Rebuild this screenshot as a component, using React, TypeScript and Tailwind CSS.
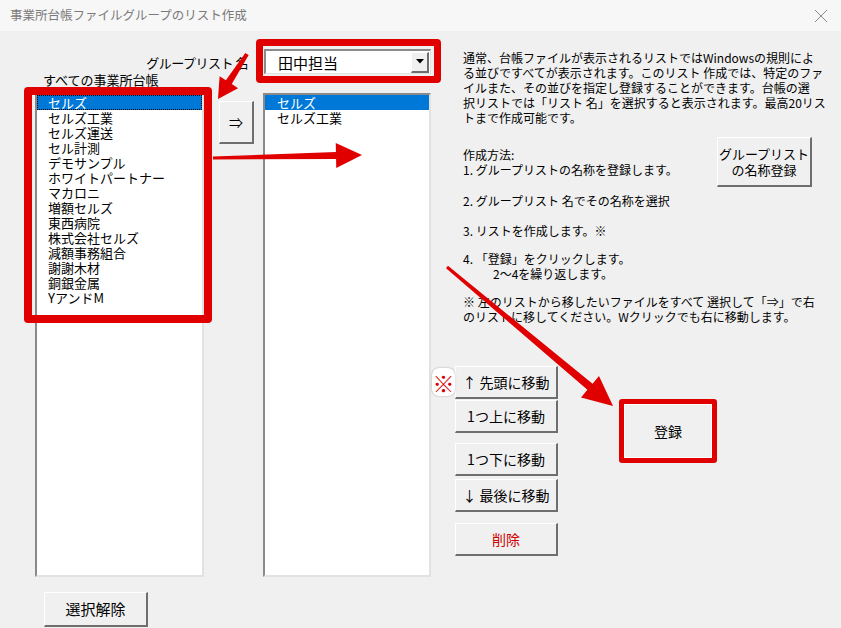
import React from "react";

type Pt = [number, number];

function arrowPoints(tail: Pt, tip: Pt, w1: number, w2: number, L: number, H: number): string {
  const dx = tip[0] - tail[0];
  const dy = tip[1] - tail[1];
  const len = Math.hypot(dx, dy);
  const ux = dx / len;
  const uy = dy / len;
  const nx = -uy;
  const ny = ux;
  const neck: Pt = [tip[0] - ux * L, tip[1] - uy * L];
  const p = (b: Pt, k: number): string => `${b[0] + nx * k},${b[1] + ny * k}`;
  return [
    p(tail, w1 / 2),
    p(neck, w2 / 2),
    p(neck, H / 2),
    `${tip[0]},${tip[1]}`,
    p(neck, -H / 2),
    p(neck, -w2 / 2),
    p(tail, -w1 / 2),
  ].join(" ");
}

const btn =
  "flex items-center justify-center bg-[#f0f0f0] border-solid border-t border-l border-r-2 border-b-2 border-t-white border-l-white border-r-[#6e6e6e] border-b-[#6e6e6e]";

const listBox =
  "bg-white border-solid border-t-2 border-l-2 border-r-2 border-b-2 border-t-[#8a8a8a] border-l-[#8a8a8a] border-r-[#e2e2e2] border-b-[#e2e2e2]";

const leftItems = [
  "セルズ工業",
  "セルズ運送",
  "セル計測",
  "デモサンプル",
  "ホワイトパートナー",
  "マカロニ",
  "増額セルズ",
  "東西病院",
  "株式会社セルズ",
  "減額事務組合",
  "謝謝木材",
  "銅銀金属",
  "YアンドM",
];

export default function App() {
  return (
    <div className="relative w-[841px] h-[628px] overflow-hidden bg-[#f0f0f0] text-black font-['Noto_Sans_CJK_JP',sans-serif]">
      {/* title bar */}
      <div className="h-[31px] bg-[#f7f7f7] flex items-center justify-between pl-[10px] pr-[13px]">
        <span className="text-[12.5px] text-[#7a7a7a] leading-none">事業所台帳ファイルグループのリスト作成</span>
        <svg width="14" height="14" viewBox="0 0 14 14">
          <path d="M1 1 L13 13 M13 1 L1 13" stroke="#8a8a8a" strokeWidth="1" fill="none" />
        </svg>
      </div>

      <div className="flex">
        {/* left block */}
        <div className="ml-[35px] w-[396px] flex flex-col">
          <div className="flex h-[62px]">
            <div className="w-[229px] flex flex-col">
              <div className="mt-[24px] pr-[16px] text-right text-[13px] leading-[15px] tracking-[-0.5px]">グループリスト 名</div>
              <div className="mt-[2px] pl-[8px] text-[13px] leading-[15px]">すべての事業所台帳</div>
            </div>
            <div className="mt-[18px] w-[167px] h-[25px] bg-white border-solid border-t-2 border-l-2 border-r border-b border-t-[#8a8a8a] border-l-[#8a8a8a] border-r-[#e2e2e2] border-b-[#e2e2e2] flex items-center">
              <span className="flex-1 pl-[12px] text-[15px] leading-none">田中担当</span>
              <div className={"w-[18px] h-[21px] mr-[1px] " + btn}>
                <svg width="8" height="5" viewBox="0 0 8 5">
                  <path d="M0 0 L8 0 L4 4.5 Z" fill="#000" />
                </svg>
              </div>
            </div>
          </div>

          <div className="flex items-start">
            <div className={"w-[169px] h-[484px] " + listBox}>
              <div className="h-[15px] bg-[#0078d7] text-white text-[13px] leading-[15px] pl-[11px] outline-1 outline-dotted outline-black -outline-offset-1">
                セルズ
              </div>
              {leftItems.map((t) => (
                <div key={t} className="h-[15px] text-[13px] leading-[15px] pl-[11px] whitespace-nowrap">
                  {t}
                </div>
              ))}
            </div>
            <div className={"ml-[15px] mt-[8px] w-[35px] h-[43px] text-[14px] " + btn}>⇒</div>
            <div className={"ml-[9px] w-[168px] h-[484px] " + listBox}>
              <div className="h-[15px] bg-[#0078d7] text-white text-[13px] leading-[15px] pl-[12px]">セルズ</div>
              <div className="h-[15px] text-[13px] leading-[15px] pl-[12px]">セルズ工業</div>
            </div>
          </div>

          <div className={"mt-[15px] ml-[9px] w-[104px] h-[35px] text-[15px] " + btn}>選択解除</div>
        </div>

        {/* right block */}
        <div className="ml-[24px] flex-1 flex flex-col">
          <div className="pl-[8px] pt-[19px] text-[12px] leading-[15px] whitespace-nowrap">
            <div>通常、台帳ファイルが表示されるリストではWindowsの規則によ</div>
            <div>る並びですべてが表示されます。このリスト 作成では、特定のファ</div>
            <div>イルまた、その並びを指定し登録することができます。台帳の選</div>
            <div>択リストでは「リスト 名」を選択すると表示されます。最高20リス</div>
            <div>トまで作成可能です。</div>
          </div>

          <div className="mt-[12px] flex items-start">
            <div className="mt-[10px] pl-[8px] text-[12px] leading-[15px] whitespace-nowrap">
              <div>作成方法:</div>
              <div>1. グループリストの名称を登録します。</div>
            </div>
            <div className={"ml-auto mr-[29px] w-[95px] h-[50px] flex-col text-[13px] leading-[16px] " + btn}>
              <span>グループリスト</span>
              <span>の名称登録</span>
            </div>
          </div>

          <div className="pl-[8px] text-[12px] leading-[15px] whitespace-nowrap">
            <div className="mt-[6px]">2. グループリスト 名でその名称を選択</div>
            <div className="mt-[15px]">3. リストを作成します。※</div>
            <div className="mt-[13px]">4. 「登録」をクリックします。</div>
            <div className="pl-[30px]">2～4を繰り返します。</div>
            <div className="mt-[13px]">※ 左のリストから移したいファイルをすべて 選択して「⇒」で右</div>
            <div>のリストに移してください。Wクリックでも右に移動します。</div>
          </div>

          <div className="mt-[42px] flex items-start">
            <div className="w-[103px] flex flex-col text-[14px]">
              <div className={"relative h-[33px] " + btn}>
                <span className="absolute left-[-24px] top-[1px] w-[23px] h-[28px] flex items-center justify-center rounded-[7px] bg-white shadow-[0_0_2px_rgba(0,0,0,0.35)] text-[#d40000] text-[22px] leading-none">
                  ※
                </span>
                ↑ 先頭に移動
              </div>
              <div className={"mt-[1px] h-[33px] " + btn}>1つ上に移動</div>
              <div className={"mt-[10px] h-[33px] " + btn}>1つ下に移動</div>
              <div className={"mt-[3px] h-[33px] " + btn}>↓ 最後に移動</div>
              <div className={"mt-[11px] h-[33px] text-[#cc0000] " + btn}>削除</div>
            </div>
            <div className="ml-[61px] mt-[33px] w-[98px] h-[64px] rounded-[3px] border-[5px] border-solid border-[#e00000] bg-[#f0f0f0] flex items-center justify-center text-[14px]">
              <div className="w-full h-full border border-solid border-white flex items-center justify-center">登録</div>
            </div>
          </div>
        </div>
      </div>

      {/* annotation overlays */}
      <div className="absolute left-[24px] top-[87px] w-[188px] h-[236px] rounded-[4px] border-[8px] border-solid border-[#e00000] pointer-events-none" />
      <div className="absolute left-[256px] top-[39px] w-[185px] h-[44px] rounded-[4px] border-[7px] border-solid border-[#e00000] pointer-events-none" />
      <svg className="absolute left-0 top-0 pointer-events-none" width="841" height="628" viewBox="0 0 841 628">
        <polygon points={arrowPoints([247, 54], [218, 99], 4, 7, 20, 22)} fill="#e00000" />
        <polygon points={arrowPoints([213, 158], [362, 155], 3, 7, 26, 25)} fill="#e00000" />
        <polygon points={arrowPoints([447, 267], [613, 406], 3, 8, 30, 28)} fill="#e00000" />
      </svg>
    </div>
  );
}
